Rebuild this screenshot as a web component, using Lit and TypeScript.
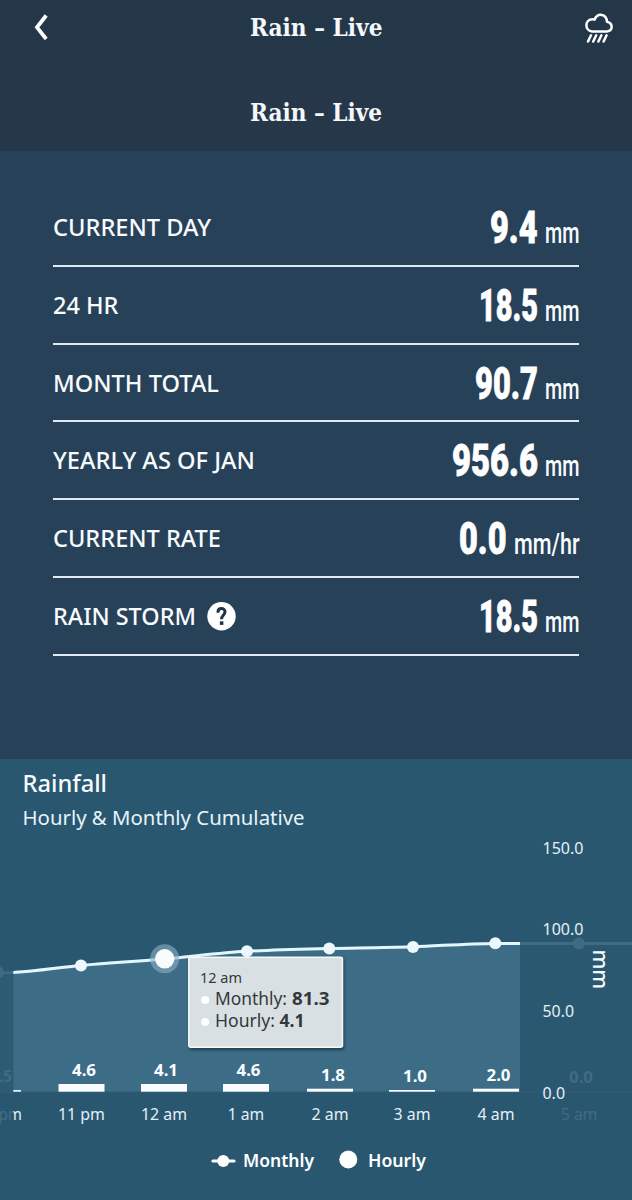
import { LitElement, html, svg, css } from "lit";
import { customElement } from "lit/decorators.js";

const READINGS = [
  { label: "CURRENT DAY", lw: 158, value: "9.4", vw: 47.5, unit: "mm", uw: 34.5 },
  { label: "24 HR", lw: 65.5, value: "18.5", vw: 59, unit: "mm", uw: 34.5 },
  { label: "MONTH TOTAL", lw: 166, value: "90.7", vw: 63, unit: "mm", uw: 34.5 },
  { label: "YEARLY AS OF JAN", lw: 202, value: "956.6", vw: 86, unit: "mm", uw: 34.5 },
  { label: "CURRENT RATE", lw: 168, value: "0.0", vw: 47.5, unit: "mm/hr", uw: 65.5 },
  { label: "RAIN STORM", lw: 143, value: "18.5", vw: 59, unit: "mm", uw: 34.5, help: true },
];

const BARS = [
  { x: 81.5, top: 1084, v: "4.6", vx: 84, vy: 1076, t: "11 pm", tw: 47 },
  { x: 164, top: 1084, v: "4.1", vx: 166, vy: 1076, t: "12 am", tw: 46 },
  { x: 246, top: 1084, v: "4.6", vx: 248.5, vy: 1076, t: "1 am", tw: 36.5 },
  { x: 330, top: 1088.7, v: "1.8", vx: 333, vy: 1080.5, t: "2 am", tw: 37 },
  { x: 412, top: 1090, v: "1.0", vx: 415, vy: 1082, t: "3 am", tw: 37 },
  { x: 496, top: 1088.7, v: "2.0", vx: 498.5, vy: 1080.5, t: "4 am", tw: 37 },
];

const DOTS = [[81, 965.5], [247, 951.3], [329.3, 948.5], [413, 947], [495.3, 943.3]];
const CURVE =
  "M-3 972.8 C4 973 10 972.8 16 972.3 C38 971 58 967.5 81 965.4 C110 962.8 137 961.3 164.5 959 C192 956.7 219 952.8 247 951.3 C274 949.8 302 949.2 329.3 948.5 C357 947.9 385 947.8 413 946.8 C440 945.8 468 943.6 495.3 943.4 L632 943.4";

@customElement("app-root")
export class AppRoot extends LitElement {
  static styles = css`
    :host { display: block; width: 632px; height: 1200px; overflow: hidden; background: #2a5770; color: #f8fbfd; font-family: "Noto Sans", "Open Sans", sans-serif; }
    svg { display: block; overflow: visible; }
    .bar { display: grid; grid-template-columns: 1fr 133px 1fr; align-items: center; box-sizing: border-box; height: 96px; padding: 0 13px 42px; background: #233748; }
    .back { margin-left: 21px; }
    .rain { justify-self: end; margin-right: 3px; }
    .title { fill: #f5f8fb; font: 700 25px "DejaVu Serif", serif; }
    .sub { display: flex; justify-content: center; box-sizing: border-box; height: 55px; padding-top: 1px; background: #253749; }
    .panel { box-sizing: border-box; height: 608px; padding: 38px 53px 0; background: #274159; }
    .row { display: flex; justify-content: space-between; align-items: flex-start; box-sizing: border-box; height: 77.8px; border-bottom: 2px solid #dfeaf1; }
    .left { display: flex; }
    .label { fill: #f8fbfd; font: 500 24px "Noto Sans", sans-serif; }
    .help { margin: 24px 0 0 11px; }
    .right { display: flex; gap: 7px; }
    .value { fill: #fff; stroke: #fff; stroke-width: 0.8px; font: 900 44.5px Roboto, sans-serif; }
    .unit { fill: #f8fbfd; font: 500 30px Roboto, sans-serif; }
    .tick { fill: #e3f0f8; font: 400 16px "Noto Sans", sans-serif; }
    .num { fill: #fafdff; font: 700 16px "Noto Sans", sans-serif; }
    .h { fill: #f8fbfd; font: 500 24px "Noto Sans", sans-serif; }
    .s { fill: #e6f4fb; font: 400 20px "Noto Sans", sans-serif; }
    .axis { fill: #f8fbfd; font: 500 21px "Noto Sans", sans-serif; }
    .tip-box { fill: #d9e0e3; stroke: #f6f9fa; stroke-width: 1.5px; filter: drop-shadow(1px 2px 1.5px rgba(10, 30, 45, 0.6)); }
    .tip { fill: #33383c; font: 400 18px "Noto Sans", sans-serif; }
    .tip-head { font-size: 14.5px; }
    .tip-num { font-weight: 700; }
    .legend { display: flex; justify-content: center; align-items: center; box-sizing: border-box; height: 74px; padding: 0 0 4px 6px; }
    .key { fill: #fff; font: 600 18px "Noto Sans", sans-serif; }
    .faint { fill: #426b83; }
  `;

  text(cls: string, value: string, width: number, baseline: number, squeeze = 1) {
    return html`<svg width=${width} height="75"><text class=${cls} transform="translate(0 ${baseline}) scale(${squeeze} 1)" textLength=${width / squeeze} lengthAdjust="spacingAndGlyphs">${value}</text></svg>`;
  }

  plot(value: string, x: number, y: number, w: number, cls: string) {
    return svg`<text class=${cls} x=${x} y=${y} textLength=${w} lengthAdjust="spacingAndGlyphs">${value}</text>`;
  }

  render() {
    return html`
      <header class="bar">
        <svg class="back" width="14" height="26" viewBox="0 0 14 26"><path d="M12.2 1.5 L3 13.3 L12.2 25" fill="none" stroke="#fff" stroke-width="3.8" /></svg>
        <svg width="133" height="54"><text class="title" x="0" y="35.5" textLength="132.5" lengthAdjust="spacingAndGlyphs">Rain – Live</text></svg>
        <svg class="rain" width="34" height="34" viewBox="581 10 34 34" fill="none" stroke="#fff" stroke-linecap="round">
          <path d="M591 31.4 C583.5 30.5 583.6 19.8 591 19.2 Q592.2 19 593.6 19.6 C596.5 12.6 605.5 13.4 606 21.8 C612.4 23.4 612 30.9 606 31.4 Z" stroke-width="2.5" stroke-linejoin="round" />
          <path d="M590 35.3 l-3 6.2 M595.2 35.3 l-3 6.2 M600.4 35.3 l-3 6.2 M605.6 35.3 l-3 6.2" stroke-width="2.5" />
        </svg>
      </header>
      <div class="sub"><svg width="133" height="54" viewBox="0 12 133 54"><text class="title" x="0" y="35.5" textLength="132" lengthAdjust="spacingAndGlyphs">Rain – Live</text></svg></div>
      <section class="panel">
        ${READINGS.map(
          (r) => html`<div class="row">
            <div class="left">
              ${this.text("label", r.label, r.lw, 46.5)}
              ${r.help
                ? html`<svg class="help" width="29" height="29" viewBox="0 0 29 29"><circle cx="14.5" cy="14.3" r="14.2" fill="#fff" /><path d="M11 10.8 V10 C11 5.5 18 5.5 18 9.8 C18 13.3 14.5 13.2 14.5 17.2" fill="none" stroke="#203448" stroke-width="3" /><rect x="12.9" y="19.3" width="3.5" height="3.6" fill="#203448" /></svg>`
                : null}
            </div>
            <div class="right">${this.text("value", r.value, r.vw, 54, 0.65)}${this.text("unit", r.unit, r.uw, 54, 0.65)}</div>
          </div>`
        )}
      </section>
      <svg width="632" height="367" viewBox="0 759 632 367">
        <defs>
          <clipPath id="plot"><rect x="13.3" y="820" width="506.7" height="306" /></clipPath>
          <clipPath id="before"><rect x="0" y="820" width="13.3" height="306" /></clipPath>
        </defs>
        ${this.plot("Rainfall", 22.5, 792, 84.5, "h")}
        ${this.plot("Hourly & Monthly Cumulative", 22.5, 824.5, 282, "s")}
        <rect x="0" y="973" width="13.3" height="118.5" fill="#2d5b74" />
        <rect x="520" y="943" width="112" height="148.5" fill="#2b5871" />
        <path d="M0 1092 H632" stroke="#345f78" />
        <path d=${CURVE} fill="none" stroke="#3f6c85" stroke-width="3" />
        <circle class="faint" cx="-2" cy="972.5" r="6" /><circle class="faint" cx="579" cy="943.5" r="6" />
        <g clip-path="url(#plot)">
          <path d="${CURVE} V1091.5 H-3 Z" fill="#3d6c87" />
          <path d=${CURVE} fill="none" stroke="#e4f6fd" stroke-width="3" />
          <rect x="0" y="1090" width="21" height="1.7" fill="#e8f3f8" />
        </g>
        ${DOTS.map(([x, y]) => svg`<circle cx=${x} cy=${y} r="6" fill="#edf8fe" />`)}
        <circle cx="164.7" cy="958.8" r="14.5" fill="#89afc2" fill-opacity=".62" />
        <circle cx="164.7" cy="958.8" r="9.7" fill="#f8fcff" />
        ${BARS.map(
          (b) => svg`<rect x=${b.x - 23} y=${b.top} width="46" height=${1091.7 - b.top} fill="#fafcff" />
          ${this.plot(b.v, b.vx - 12, b.vy, 24, "num")}
          ${this.plot(b.t, b.x - b.tw / 2, 1120, b.tw, "tick")}`
        )}
        ${this.plot(".5", -1, 1082, 13, "num faint")}
        <g clip-path="url(#plot)">${this.plot("pm", -1.5, 1120, 23.5, "tick")}</g>
        <g clip-path="url(#before)">${this.plot("pm", -1.5, 1120, 23.5, "tick faint")}</g>
        ${this.plot("0.0", 569, 1083, 24, "num faint")}
        ${this.plot("5 am", 561, 1120, 36.5, "tick faint")}
        ${this.plot("150.0", 542.5, 854, 41, "tick")}
        ${this.plot("100.0", 542.5, 935, 41, "tick")}
        ${this.plot("50.0", 542.5, 1017, 31.5, "tick")}
        ${this.plot("0.0", 542.5, 1099, 22.5, "tick")}
        <text class="axis" transform="translate(593 949.5) rotate(90)" textLength="39.5" lengthAdjust="spacingAndGlyphs">mm</text>
        <rect class="tip-box" x="188.8" y="957.3" width="153.7" height="90" rx="2" />
        ${this.plot("12 am", 200, 983, 42, "tip tip-head")}
        <circle cx="205.2" cy="1000" r="4" fill="#fff" /><circle cx="205.2" cy="1022" r="4" fill="#fff" />
        ${this.plot("Monthly:", 215, 1005, 72, "tip")}${this.plot("81.3", 292, 1005, 37.5, "tip tip-num")}
        ${this.plot("Hourly:", 215, 1027, 60, "tip")}${this.plot("4.1", 279.5, 1027, 25, "tip tip-num")}
      </svg>
      <div class="legend">
        <svg width="216" height="40" viewBox="211 1141 216 40">
          <path d="M213 1161 H234" stroke="#fff" stroke-width="3.2" stroke-linecap="round" /><circle cx="223.3" cy="1161" r="6" fill="#fff" />
          ${this.plot("Monthly", 243, 1167, 71, "key")}
          <circle cx="348.3" cy="1159.5" r="9" fill="#fff" />
          ${this.plot("Hourly", 368, 1167, 58, "key")}
        </svg>
      </div>
    `;
  }
}
